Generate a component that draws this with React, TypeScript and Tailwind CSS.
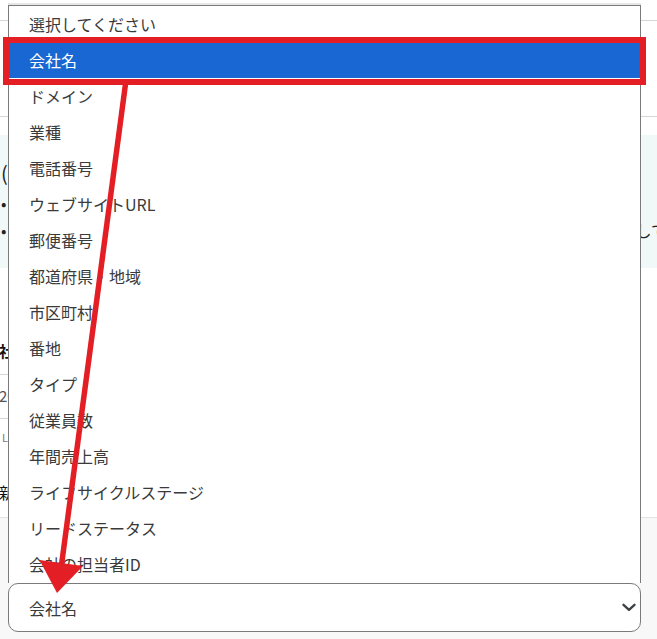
const OPTIONS = [
  "選択してください",
  "会社名",
  "ドメイン",
  "業種",
  "電話番号",
  "ウェブサイトURL",
  "郵便番号",
  "都道府県・地域",
  "市区町村",
  "番地",
  "タイプ",
  "従業員数",
  "年間売上高",
  "ライフサイクルステージ",
  "リードステータス",
  "会社の担当者ID",
];

const SELECTED = "会社名";

function Chevron() {
  return (
    <svg width="14" height="9" viewBox="0 0 14 9" fill="none" className="shrink-0">
      <path d="M1.5 1.8 L7 6.8 L12.5 1.8" stroke="#3c4043" strokeWidth="2.3" strokeLinecap="round" strokeLinejoin="round" />
    </svg>
  );
}

// Page behind the open select (mostly hidden)
function BackgroundPage() {
  return (
    <div className="flex flex-col h-full">
      <div className="h-[21px] border-b border-[#d6d6d6]" />
      <div className="h-[96px] border-b border-[#d6d6d6]" />
      <div className="mt-[18px] h-[133px] bg-[#f0f9f8] flex flex-col pl-[1px] pt-[21px]">
        <p className="text-[20px] leading-[34px] text-[#222]">(会社情報)</p>
        <div className="flex justify-between text-[16px] leading-[27px] text-[#222]">
          <span>• 項目</span>
        </div>
        <div className="flex justify-between text-[16px] leading-[27px] text-[#222]">
          <span>• 項目</span>
          <span className="mr-[-10px]">して</span>
        </div>
      </div>
      <div className="w-[600px] h-[107px] border-b border-[#d6d6d6] flex items-end pb-[12px]">
        <span className="ml-[-1px] text-[15px] font-bold text-[#111]">社名</span>
      </div>
      <div className="w-[600px] h-[44px] border-b border-[#d6d6d6] flex items-center">
        <span className="ml-[-1px] text-[15px] text-[#555]">2024</span>
      </div>
      <div className="h-[98px] flex flex-col">
        <span className="mt-[10px] ml-[2px] text-[11px] text-[#777]">LINE</span>
        <span className="mt-[34px] ml-[-1px] text-[16px] text-[#111]">新規</span>
      </div>
      <div className="flex-1 bg-[#f8f8f8] border-t border-[#e2e2e2]" />
    </div>
  );
}

export default function App() {
  return (
    <div
      className="relative w-[657px] h-[639px] overflow-hidden bg-white"
      style={{ fontFamily: '"Noto Sans CJK JP", "Noto Sans", sans-serif' }}
    >
      <BackgroundPage />

      {/* open native select: option list + closed control */}
      <div className="absolute left-[8px] top-[5px] w-[633px] flex flex-col">
        <div className="h-[578px] bg-white border-x border-t border-[#7a7a7a] shadow-[0_-2px_0_0_#e6e6e6] overflow-hidden">
          {OPTIONS.map((opt) => (
            <div
              key={opt}
              className={
                opt === SELECTED
                  ? "h-[36px] flex items-center pl-[20px] text-[16px] bg-[#1967d2] text-white"
                  : "h-[36px] flex items-center pl-[20px] text-[16px] text-[#3a3a3a]"
              }
            >
              {opt}
            </div>
          ))}
        </div>
        <div className="h-[49px] bg-white border border-[#7a7a7a] rounded-[10px] flex items-center justify-between pl-[20px] pr-[4px]">
          <span className="text-[16px] text-[#3a3a3a]">会社名</span>
          <Chevron />
        </div>
      </div>

      {/* annotation: highlight box */}
      <div className="absolute left-[3px] top-[37px] w-[643px] h-[48px] border-[6px] border-[#e31e24]" />

      {/* annotation: arrow */}
      <svg className="absolute inset-0 pointer-events-none" width="657" height="639" viewBox="0 0 657 639">
        <line x1="125.5" y1="84" x2="61.5" y2="565" stroke="#e31e24" strokeWidth="5.5" />
        <polygon points="39.5,560 83,566 57,593" fill="#e31e24" />
      </svg>
    </div>
  );
}
